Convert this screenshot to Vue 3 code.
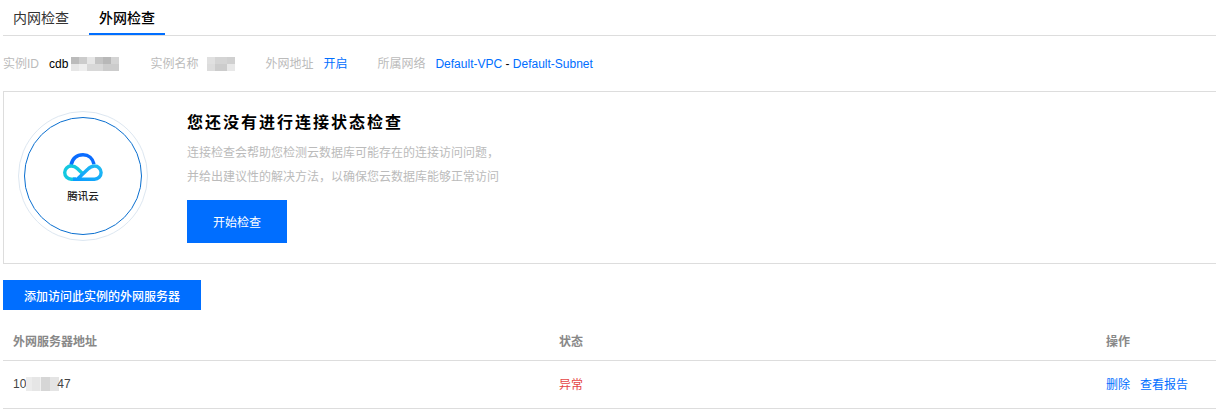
<template>
  <div class="page">
    <!-- Tabs -->
    <div class="tabs">
      <a class="tab">内网检查</a>
      <a class="tab active">外网检查</a>
    </div>

    <!-- Instance info -->
    <div class="info">
      <div class="info-item">
        <span class="info-label">实例ID</span>
        <span class="info-value">cdb<i class="mask mask-id"></i></span>
      </div>
      <div class="info-item">
        <span class="info-label">实例名称</span>
        <i class="mask mask-name"></i>
      </div>
      <div class="info-item">
        <span class="info-label">外网地址</span>
        <a class="link">开启</a>
      </div>
      <div class="info-item">
        <span class="info-label">所属网络</span>
        <span class="info-value"><a class="link">Default-VPC</a> - <a class="link">Default-Subnet</a></span>
      </div>
    </div>

    <!-- Check card -->
    <div class="check-card">
      <div class="logo-ring">
        <div class="logo-circle">
          <svg class="logo-icon" width="40" height="29" viewBox="0 0 40 29" fill="none">
            <defs>
              <linearGradient id="cloudRight" x1="0" y1="1" x2="1" y2="0">
                <stop offset="0" stop-color="#0a9cff" />
                <stop offset="1" stop-color="#22bdf2" />
              </linearGradient>
            </defs>
            <path d="M8 12C9.500 5.500 14 1.800 20 1.800c5.500 0 9.800 3.400 11 9.400" stroke="#0a6cff" stroke-width="3.500" />
            <path d="M13 26.200H8.300A6.600 6.600 0 0 1 8.300 13c2.700 0 4.500 1 6 2.500L19.500 20.500" stroke="#14c8e0" stroke-width="3.400" />
            <path d="M10 26.200H31.500A6.600 6.600 0 0 0 31.500 13c-2.700 0-4.500 1-6.500 3L15 25.500" stroke="url(#cloudRight)" stroke-width="3.400" />
          </svg>
          <span class="logo-text">腾讯云</span>
        </div>
      </div>
      <div class="check-body">
        <h3 class="check-title">您还没有进行连接状态检查</h3>
        <p class="check-desc">连接检查会帮助您检测云数据库可能存在的连接访问问题，</p>
        <p class="check-desc">并给出建议性的解决方法，以确保您云数据库能够正常访问</p>
        <button class="btn btn-start">开始检查</button>
      </div>
    </div>

    <button class="btn btn-add">添加访问此实例的外网服务器</button>

    <!-- Server table -->
    <div class="table">
      <div class="row head">
        <div class="cell col-addr">外网服务器地址</div>
        <div class="cell col-status">状态</div>
        <div class="cell col-op">操作</div>
      </div>
      <div class="row body-row">
        <div class="cell col-addr ip">10<i class="mask mask-ip"></i><span class="ip-end">47</span></div>
        <div class="cell col-status error">异常</div>
        <div class="cell col-op ops">
          <a class="link">删除</a>
          <a class="link">查看报告</a>
        </div>
      </div>
    </div>
  </div>
</template>

<script setup>
</script>

<style>
html, body {
  margin: 0;
  background: #fff;
  overflow: hidden;
}
</style>

<style scoped>
.page {
  width: 1216px;
  height: 411px;
  box-sizing: border-box;
  padding-left: 3px;
  overflow: hidden;
  font-family: "Liberation Sans", "Noto Sans CJK SC", sans-serif;
  font-size: 12px;
  color: #000;
}

.tabs {
  display: flex;
  gap: 10px;
  height: 36px;
  box-sizing: border-box;
  border-bottom: 1px solid #ddd;
}

.tab {
  padding: 0 10px;
  height: 35px;
  box-sizing: border-box;
  font-size: 14px;
  line-height: 36px;
  color: #333;
}

.tab.active {
  color: #000;
  font-weight: 500;
  border-bottom: 2px solid #006eff;
}

.info {
  display: flex;
  gap: 30px;
  height: 55px;
  align-items: center;
}

.info-item {
  display: flex;
  align-items: center;
  gap: 10px;
  line-height: 20px;
}

.info-label {
  color: #bbb;
}

.info-value {
  display: flex;
  align-items: center;
  color: #000;
  white-space: pre;
}

.link {
  color: #006eff;
}

.mask {
  display: inline-block;
  height: 14px;
}

.mask-id {
  width: 48px;
  margin: 0 1px 0 3px;
  background:
    linear-gradient(90deg, #bbb 0 8px, #ccc 8px 16px, #e6e6e6 16px 24px, #c4c4c4 24px 32px, #b8b8b8 32px 40px, #d4d4d4 40px 48px) top / 100% 7px no-repeat,
    linear-gradient(90deg, #e6e6e6 0 8px, #eee 8px 16px, #d8d8d8 16px 32px, #ccc 32px 48px) bottom / 100% 7px no-repeat;
}

.mask-name {
  width: 28px;
  margin-left: -1px;
  background:
    linear-gradient(90deg, #e0e0e0 0 8px, #d4d4d4 8px 20px, #d0d0d0 20px 28px) top / 100% 7px no-repeat,
    linear-gradient(90deg, #dcdcdc 0 8px, #ccc 8px 20px, #e8e8e8 20px 28px) bottom / 100% 7px no-repeat;
}

.mask-ip {
  width: 33px;
  margin-right: -2px;
  background: linear-gradient(90deg, #ececec 0 6px, #e6e6e6 6px 14px, #f0f0f0 14px 15px, #d6d6d6 15px 24px, #e4e4e4 24px 33px);
}

.ip-end {
  position: relative;
}

.check-card {
  display: flex;
  gap: 39px;
  width: 1240px;
  box-sizing: border-box;
  padding: 18px 14px 20px;
  border: 1px solid #ddd;
}

.logo-ring {
  flex: none;
  width: 130px;
  height: 130px;
  margin-top: 1px;
  box-sizing: border-box;
  padding: 5px;
  border: 1px solid #dde7f1;
  border-radius: 50%;
}

.logo-circle {
  height: 100%;
  box-sizing: border-box;
  display: flex;
  flex-direction: column;
  align-items: center;
  justify-content: center;
  border: 1px solid #0a6fd0;
  border-radius: 50%;
}

.logo-icon {
  display: block;
  margin-top: 5px;
}

.logo-text {
  margin-top: 6px;
  font-size: 10.500px;
  font-weight: 500;
  line-height: 16px;
  color: #222;
}

.check-title {
  margin: 1px 0 6px;
  font-size: 16px;
  font-weight: 700;
  line-height: 24px;
  letter-spacing: 2px;
  color: #000;
}

.check-desc {
  margin: 0;
  line-height: 24px;
  color: #bbb;
}

.btn {
  display: block;
  border: 0;
  padding: 0;
  background: #006eff;
  color: #fff;
  font-family: inherit;
  font-size: 12px;
}

.btn-start {
  width: 100px;
  height: 43px;
  margin-top: 11px;
}

.btn-add {
  width: 198px;
  height: 30px;
  margin-top: 16px;
  font-weight: 500;
}

.table {
  margin-top: 10px;
}

.row {
  display: flex;
  height: 48px;
  align-items: center;
  border-bottom: 1px solid #ddd;
  box-sizing: border-box;
}

.row.body-row {
  padding-bottom: 2px;
}

.row.head {
  height: 41px;
  font-weight: 700;
  color: #888;
}

.cell {
  padding: 0 10px;
  box-sizing: border-box;
}

.col-addr {
  width: 546px;
}

.col-status {
  width: 547px;
}

.col-op {
  width: 120px;
}

.ip {
  display: flex;
  align-items: center;
  color: #444;
}

.error {
  color: #e54545;
}

.ops {
  display: flex;
  gap: 10px;
}
</style>
